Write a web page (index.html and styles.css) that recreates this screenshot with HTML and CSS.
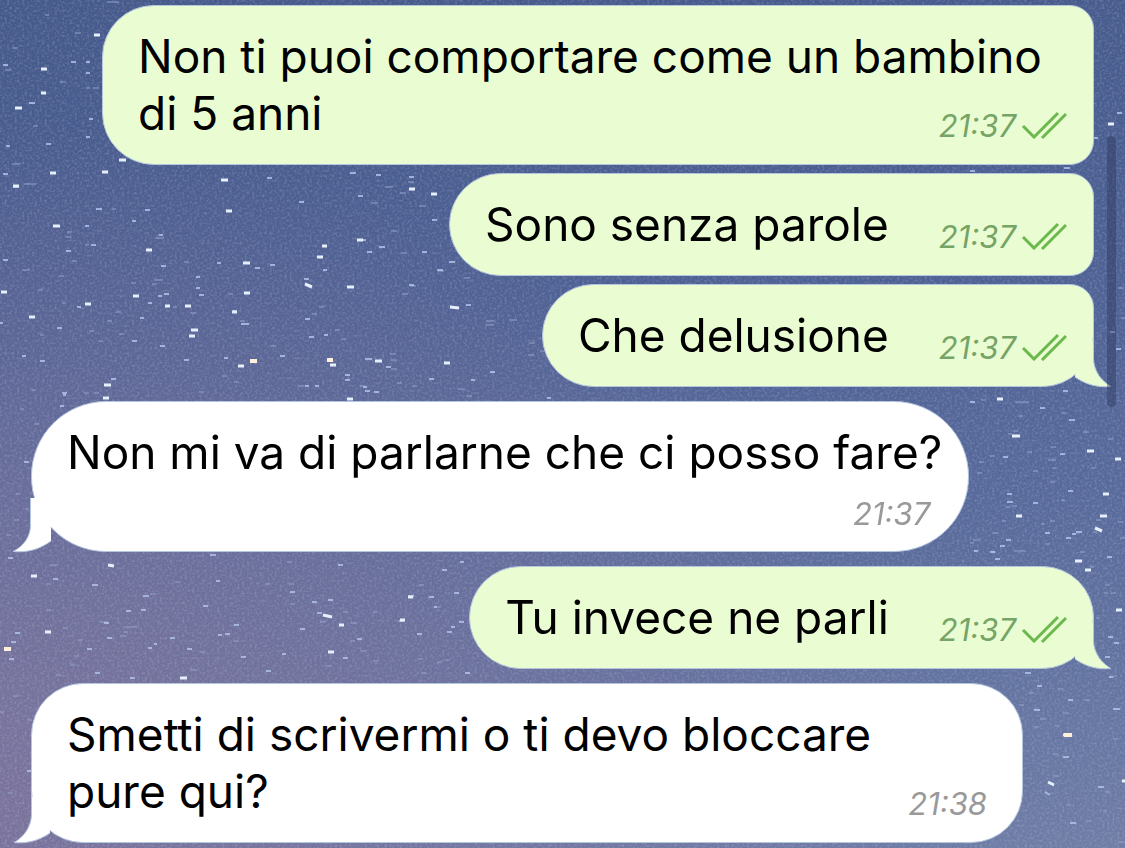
FILE: index.html
```html
<!DOCTYPE html>
<html lang="it">

<head>
    <meta charset="UTF-8">
    <meta name="viewport" content="width=device-width, initial-scale=1.0">
    <title>Chat</title>
    <link rel="stylesheet" href="styles.css">
</head>

<body>
    <!-- night sky wallpaper -->
    <svg class="sky" viewBox="0 0 1125 848" preserveAspectRatio="xMidYMid slice" aria-hidden="true">
        <filter id="grain">
            <feTurbulence type="fractalNoise" baseFrequency="0.4" numOctaves="2" seed="4" />
            <feColorMatrix values="0 0 0 0 0.75  0 0 0 0 0.8  0 0 0 0 0.95  1.4 0 0 0 -0.6" />
        </filter>
        <rect class="grain" width="1125" height="848" filter="url(#grain)" />
        <path class="faint" d="M60 82h5M86 88h4M33 126h5M12 164h8M24 184h12M112 209h4M85 245h4M67 232h5M66 237h5M22 270h8M59 276h5M72 261h5M155 238h9M154 280h9M152 284h5M131 283h5M184 262h5M173 307h4M190 313h6M229 294h4M38 290h5M62 303h4M116 312h5M107 321h5M89 331h5M40 335h4M99 341h4M119 334h5M240 321h5M312 314h5M319 307h5M335 330h5M341 339h5M271 346h5M222 376h5M234 382h5M299 386h5M360 386h5M31 390h4M199 392h5M46 584h4M50 565h8M150 594h6M46 610h5M63 628h5M123 632h5M125 627h12M100 622h8M120 636h6M78 640h5M233 641h5M200 652h5M74 656h5M70 665h5M191 670h6M175 582h5M287 562h5M265 584h5M289 584h5M290 604h5M343 612h5M320 622h6M351 623h6M350 641h5M361 651h6M326 666h5M373 661h5M373 612h5M419 585h5M435 607h5M418 659h5M437 662h5M445 660h5M421 673h5M385 187h8M400 193h6M408 182h6M419 206h7M371 203h7M391 231h6M401 253h6M402 294h6M410 286h6M438 271h6M464 278h6M486 321h9M486 325h8M509 320h8M529 343h6M528 355h6M540 351h5M397 383h5M412 386h5M458 389h7M466 396h6M390 354h6M391 360h6M391 369h6M981 400h5M1015 402h14M1018 416h5M1061 413h5M1083 432h6M1013 431h5M1008 434h4M1108 439h5M990 456h5M979 462h5M1027 452h5M1051 447h5M1048 460h8M1053 468h4M1033 471h5M977 473h5M1050 482h5M1091 468h4M1061 500h4M1012 506h5M1006 507h4M1002 521h4M1041 524h4M1050 521h5M1096 520h5M1118 522h5M1120 538h5M1093 532h4M973 540h7M970 543h4M993 533h5M1014 551h12M992 552h4M1045 544h5M1080 552h5M1090 567h4M1105 585h5M1104 593h4M1111 593h5M1096 618h4M1029 693h5M1058 689h5M1084 700h6M1040 719h6M1034 727h5M1063 713h6M1055 726h4M1113 739h5M1053 754h5M1054 776h5M1105 792h5M1066 805h5M1103 811h4M1086 821h5M1118 842h7M20 409h4M34 424h5M16 494h4M25 509h4M14 520h5M6 535h5M84 393h5M94 393h5M56 675h5M13 696h5M27 720h5M0 712h4M8 793h5M1118 288h6M1121 318h4M1069 375h5M1113 676h4M1019 705h5M45 15h4M75 33h6M13 48h5M107 2h12M5 70h6M93 88h6" />
        <path class="dim" d="M3 65h5M71 62h5M86 62h4M86 73h4M29 103h6M89 119h4M86 137h4M46 144h5M6 146h4M3 174h5M13 187h6M96 209h6M145 210h5M132 221h4M85 226h4M91 245h5M66 251h5M3 260h5M159 235h4M161 266h5M217 263h4M255 268h5M270 265h5M196 277h4M299 202h5M267 178h5M350 173h6M358 196h5M323 270h4M304 279h5M367 252h5M196 288h4M158 296h4M164 294h5M148 303h4M140 318h4M77 307h4M57 328h5M132 341h5M160 346h5M184 360h5M40 361h5M22 356h4M62 393h5M111 379h5M233 311h4M241 324h8M305 319h5M309 337h5M324 335h4M280 356h5M224 358h4M367 359h5M315 386h4M305 386h4M345 375h5M345 380h5M365 391h5M0 323h3M199 295h5M8 558h5M53 579h5M92 585h6M143 596h6M126 611h5M141 610h5M15 633h5M11 642h5M9 659h5M107 638h5M87 649h5M104 623h5M148 648h4M154 644h3M170 638h5M187 649h5M218 635h4M225 634h5M234 625h5M203 606h5M210 555h6M216 581h4M130 678h5M95 673h5M241 657h5M266 671h5M282 654h4M300 629h5M338 565h5M290 592h5M312 602h5M328 600h5M317 613h5M339 625h5M343 658h5M357 639h5M399 621h5M408 596h6M429 597h5M434 607h3M442 570h5M460 562h4M454 593h5M417 634h5M447 632h5M451 627h4M459 622h5M465 673h5M376 175h5M409 177h5M432 220h5M361 240h5M379 247h6M422 252h5M449 262h6M437 270h6M409 285h5M466 305h5M365 359h5M386 367h5M490 372h5M471 380h4M429 379h5M374 392h5M363 387h4M547 398h4M970 402h5M1063 391h5M1040 408h5M1069 420h6M1060 454h5M1003 457h5M1068 491h5M1007 494h5M1007 502h6M1033 503h5M1045 533h5M1066 538h5M1072 534h4M1076 532h6M1006 540h5M1000 546h5M990 552h5M995 559h5M974 551h4M1107 557h5M1025 673h6M1109 677h4M1037 686h5M1068 700h5M1113 709h7M1034 710h6M1063 757h6M1045 792l5 3M1098 787h6M1070 823h6M1108 637h5M1114 643h5M1105 657h5M60 406h4M24 462h5M63 395h3M27 771h5M1117 113h5M1094 138h4M1064 168h6M970 171h5M1116 349h5M1110 332h5" />
        <path class="lit" d="M94 35h6M41 69h6M41 93h5M15 108h7M50 173h6M102 172h6M119 160h7M13 186h6M53 226h7M221 180h7M226 211h6M146 250h6M243 263h7M317 257h6M322 246h5M357 240h6M347 287h7M305 284l7 3M1 292h6M85 304h6M29 317h6M133 296h6M165 306h5M185 306h6M244 293h6M191 330h7M189 336h6M232 312h5M238 366h6M330 365h6M104 385h7M103 398h6M347 399h6M108 565l6 1M31 576h6M45 632h6M180 678h7M323 615l9 2M328 652h6M339 625h5M400 620h5M408 597h5M409 189h6M431 194h6M450 307l9 1M375 361h7M444 363h6M997 399h6M1012 436h8M1087 451h7M1115 459h6M1103 494h6M1100 516h7M1095 528l7 3M1016 516h6M1075 561h7M1085 570h6M1116 610h6M1063 735h9M1048 782l6 3M1122 781h3M1108 124h6" />
        <path class="warm" d="M250 361h7M327 360h6M4 649h7M1064 735h8" />
    </svg>

    <!-- shared shapes -->
    <svg class="defs" aria-hidden="true">
        <symbol id="ticks" viewBox="0 0 46 28">
            <path d="M2 15l11 11L37 2M21 27L45 3" />
        </symbol>
        <symbol id="tail" viewBox="0 0 66 56">
            <path class="fill" d="M30 8H46.500V26C47 38 54 48 64 53.500C50 55 38 51 28 44z" />
            <path class="edge" d="M46.500 0V26C47 38 54 48 64 53.500C50 55 38 51 28 44" />
        </symbol>
        <symbol id="tail-cut" viewBox="0 0 66 56">
            <path class="fill" d="M30 0H47.500V26C47 38 54 48 65 53.500C50 55 38 51 27 43V30z" />
            <path class="edge" d="M47.500 0V26C47 38 54 48 65 53.500C50 55 38 51 27 43" />
        </symbol>
    </svg>

    <main class="chat">
        <div class="bubble out grouped wide">
            Non ti puoi comportare come un bambino<br>di 5 anni
            <span class="meta"><time>21:37</time><svg class="ticks" role="img" aria-label="Letto"><use href="#ticks" /></svg></span>
        </div>
        <div class="bubble out grouped">
            Sono senza parole
            <span class="meta"><time>21:37</time><svg class="ticks" role="img" aria-label="Letto"><use href="#ticks" /></svg></span>
        </div>
        <div class="bubble out last">
            Che delusione
            <span class="meta"><time>21:37</time><svg class="ticks" role="img" aria-label="Letto"><use href="#ticks" /></svg></span>
            <svg class="tail"><use href="#tail" /></svg>
        </div>
        <div class="bubble in round">
            Non mi va di parlarne che ci posso fare?
            <span class="meta below"><time>21:37</time></span>
            <svg class="tail"><use href="#tail-cut" /></svg>
        </div>
        <div class="bubble out last first">
            Tu invece ne parli
            <span class="meta"><time>21:37</time><svg class="ticks" role="img" aria-label="Letto"><use href="#ticks" /></svg></span>
            <svg class="tail"><use href="#tail" /></svg>
        </div>
        <div class="bubble in wide">
            Smetti di scrivermi o ti devo bloccare<br>pure qui?
            <span class="meta"><time>21:38</time></span>
            <svg class="tail"><use href="#tail" /></svg>
        </div>
    </main>

    <div class="scrollbar"></div>
</body>

</html>
```
FILE: styles.css
```css
* {
    box-sizing: border-box;
}

body {
    margin: 0;
    min-height: 100vh;
    font-family: Inter, "Liberation Sans", sans-serif;
    color: #000;
    background: radial-gradient(ellipse at 0% 95%, #7a739c 0%, rgba(112, 110, 156, 0) 60%),
        linear-gradient(175deg, #45598a 0%, #4d6093 35%, #586a9b 62%, #6f7da6 100%);
    overflow: hidden;
}

.sky {
    position: fixed;
    inset: 0;
    z-index: -1;
    width: 100%;
    height: 100%;
}

.sky path {
    fill: none;
    stroke-width: 2;
}

.grain {
    opacity: 0.35;
}

.faint {
    stroke: #93a3cb;
    opacity: 0.5;
}

.dim {
    stroke: #b4c6ec;
    opacity: 0.8;
}

.sky .lit {
    stroke: #e6effc;
    stroke-width: 3;
}

.sky .warm {
    stroke: #fff0dc;
    stroke-width: 4;
}

.defs {
    position: absolute;
    width: 0;
    height: 0;
}

.chat {
    display: flex;
    flex-direction: column;
    align-items: flex-start;
    gap: 14px;
    padding: 5px 31px;
}

.bubble {
    position: relative;
    display: flow-root;
    max-width: 100%;
    padding: 22px 35px;
    border: 1px solid #b4c5de;
    border-radius: 52px;
    font-size: 46px;
    line-height: 57px;
}

.out {
    align-self: flex-end;
    padding-right: 26px;
    background: #eafdd2;
    --fill: #eafdd2;
}

.in {
    background: #fff;
    --fill: #fff;
}

.wide {
    width: 992px;
}

/* bubbles followed by another one from the same sender */
.grouped {
    margin-bottom: -6px;
    border-radius: 52px 24px 24px 52px;
}

.last {
    border-top-right-radius: 24px;
}

.first {
    border-top-right-radius: 52px;
}

.round {
    padding-right: 26px;
    border-radius: 75px;
}

.meta {
    float: right;
    display: flex;
    gap: 5px;
    margin: 26px 0 -22px 50px;
    font-size: 31px;
    font-style: italic;
    line-height: 30px;
    color: #76a466;
}

.in .meta {
    color: #999;
}

.below {
    float: none;
    justify-content: flex-end;
    margin: 18px 12px 0 0;
}

.ticks {
    width: 46px;
    height: 28px;
    fill: none;
    stroke: #6bb84c;
    stroke-width: 3;
}

.tail {
    position: absolute;
    right: -20px;
    bottom: -3px;
    width: 66px;
    height: 56px;
}

.in .tail {
    right: auto;
    left: -20px;
    transform: scaleX(-1);
}

.fill {
    fill: var(--fill);
}

.edge {
    fill: none;
    stroke: #b4c5de;
}

.scrollbar {
    position: fixed;
    top: 16%;
    right: 9px;
    width: 9px;
    height: 32%;
    border-radius: 5px;
    background: rgba(40, 50, 85, 0.4);
}
```
